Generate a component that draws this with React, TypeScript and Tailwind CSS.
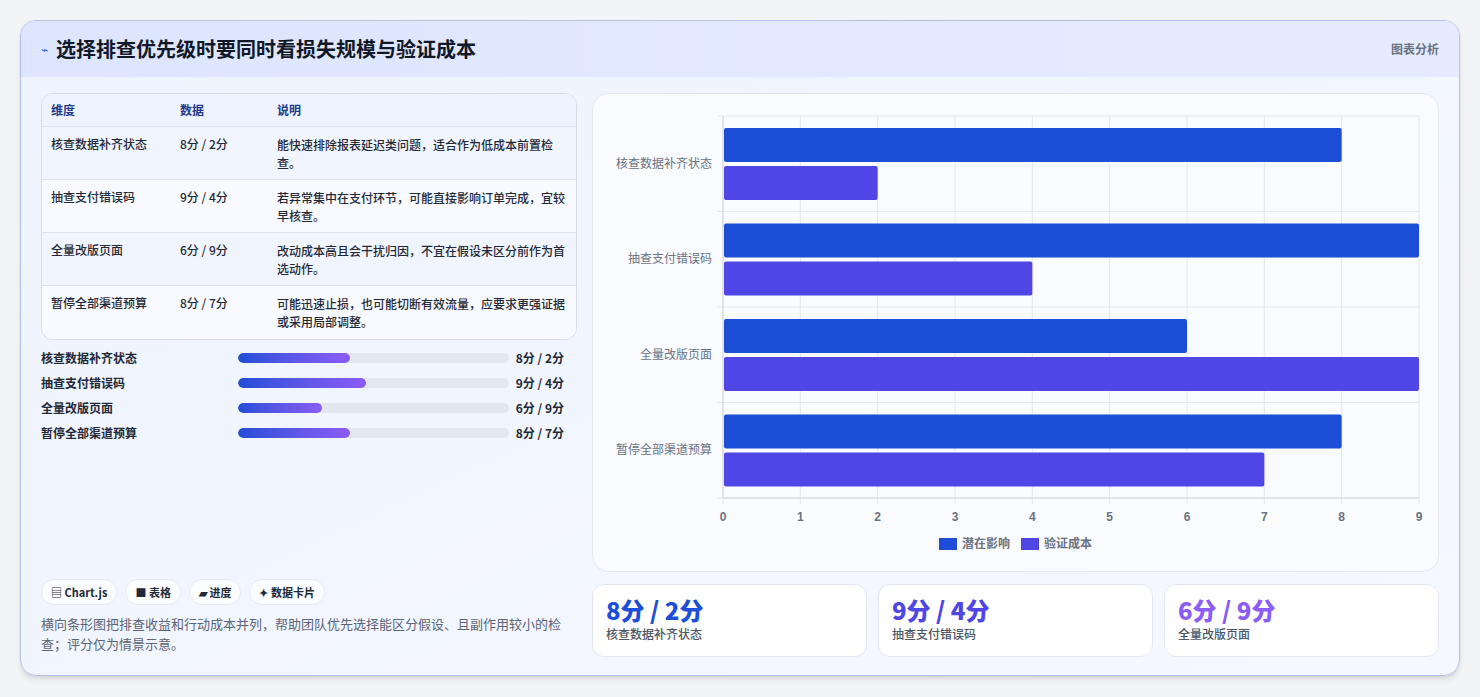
import React from "react";

const rows = [
  { name: "核查数据补齐状态", v: "8分 / 2分", d: "能快速排除报表延迟类问题，适合作为低成本前置检查。", a: 8, b: 2, w: 112 },
  { name: "抽查支付错误码", v: "9分 / 4分", d: "若异常集中在支付环节，可能直接影响订单完成，宜较早核查。", a: 9, b: 4, w: 128 },
  { name: "全量改版页面", v: "6分 / 9分", d: "改动成本高且会干扰归因，不宜在假设未区分前作为首选动作。", a: 6, b: 9, w: 84 },
  { name: "暂停全部渠道预算", v: "8分 / 7分", d: "可能迅速止损，也可能切断有效流量，应要求更强证据或采用局部调整。", a: 8, b: 7, w: 112 },
];

function Chart() {
  const x0 = 130, x1 = 826, y0 = 22, y1 = 404;
  const u = (x1 - x0) / 9;
  const band = (y1 - y0) / 4;
  return (
    <svg width="845" height="479" className="block" style={{ fontFamily: "'Liberation Sans','Noto Sans CJK SC',sans-serif" }}>
      {Array.from({ length: 10 }).map((_, i) => (
        <g key={i}>
          <line x1={x0 + i * u} x2={x0 + i * u} y1={y0} y2={y1 + 6} stroke="#e5e7eb" />
          <text x={x0 + i * u} y={427} textAnchor="middle" fontSize="12" fontWeight="bold" fill="#6b7280">{i}</text>
        </g>
      ))}
      {Array.from({ length: 5 }).map((_, i) => (
        <line key={i} x1={x0 - 6} x2={x1} y1={y0 + i * band} y2={y0 + i * band} stroke="#e5e7eb" />
      ))}
      <line x1={x0} x2={x0} y1={y0} y2={y1} stroke="#d1d5db" />
      <line x1={x0} x2={x1} y1={y1} y2={y1} stroke="#d1d5db" />
      {rows.map((r, i) => {
        const top = y0 + i * band;
        return (
          <g key={i}>
            <rect x={x0 + 1} y={top + 12} width={r.a * u - 1} height={34} rx="2" fill="#1d4ed8" />
            <rect x={x0 + 1} y={top + 50} width={r.b * u - 1} height={34} rx="2" fill="#4f46e5" />
            <text x={119} y={top + band / 2 + 4} textAnchor="end" fontSize="12" fill="#6b7280">{r.name}</text>
          </g>
        );
      })}
      <rect x={346} y={444} width={18} height={12} fill="#1d4ed8" />
      <text x={369} y={454} fontSize="12" fontWeight="bold" fill="#6b7280">潜在影响</text>
      <rect x={428} y={444} width={18} height={12} fill="#4f46e5" />
      <text x={451} y={454} fontSize="12" fontWeight="bold" fill="#6b7280">验证成本</text>
    </svg>
  );
}

export default function App() {
  return (
    <div className="w-[1480px] h-[697px] bg-[#f3f4f6] pt-5 px-5" style={{ fontFamily: "'Noto Sans CJK SC','Liberation Sans',sans-serif" }}>
      <div className="h-[656px] rounded-2xl border border-[#b7c0ec] bg-gradient-to-br from-[#eef3ff] to-[#f5f8ff] overflow-hidden shadow-md">
        <div className="h-[56px] bg-gradient-to-r from-[#dde5ff] to-[#e6ecff] flex items-center justify-between px-5">
          <div className="flex items-center gap-2">
            <span className="text-[#2563eb] text-xs">⌁</span>
            <span className="text-[20px] font-bold text-[#111827]">选择排查优先级时要同时看损失规模与验证成本</span>
          </div>
          <span className="text-xs font-bold text-[#6b7280]">图表分析</span>
        </div>
        <div className="flex gap-[15px] px-5 pt-4">
          <div className="w-[540px] h-[564px] flex flex-col">
            <div className="rounded-xl border border-[#d6dceb] overflow-hidden bg-white/60 text-xs">
              <div className="flex h-[33px] items-center bg-[#eef3ff] border-b border-[#dde3ee] font-bold text-[#1e3a8a]">
                <div className="w-[138px] pl-[9px]">维度</div>
                <div className="w-[97px]">数据</div>
                <div className="flex-1">说明</div>
              </div>
              {rows.map((r, i) => (
                <div key={i} className={`flex h-[53px] pt-[9px] ${i % 2 ? "bg-[#f8faff]" : "bg-[#f1f5ff]"} ${i < 3 ? "border-b border-[#dde3ee]" : ""} text-[#1f2937] font-medium`}>
                  <div className="w-[138px] pl-[9px]">{r.name}</div>
                  <div className="w-[97px]">{r.v}</div>
                  <div className="flex-1 pr-2 leading-[18px]">{r.d}</div>
                </div>
              ))}
            </div>
            <div className="mt-[9px] flex flex-col gap-[7px]">
              {rows.map((r, i) => (
                <div key={i} className="flex items-center h-[18px] text-xs font-bold text-[#1f2937]">
                  <div className="w-[197px]">{r.name}</div>
                  <div className="w-[271px] h-[10px] rounded-full bg-[#e3e8f0] overflow-hidden">
                    <div className="h-full rounded-full bg-gradient-to-r from-[#1d4ed8] to-[#8b5cf6]" style={{ width: r.w }} />
                  </div>
                  <div className="flex-1 text-right pr-[13px]">{r.v}</div>
                </div>
              ))}
            </div>
            <div className="flex-1" />
            <div className="flex gap-2 text-[11px] font-bold text-[#1f2937]">
              <span className="rounded-full bg-white/80 border border-[#e5e9f2] px-[9px] py-[4px]">▤ Chart.js</span>
              <span className="rounded-full bg-white/80 border border-[#e5e9f2] px-[9px] py-[4px]">■ 表格</span>
              <span className="rounded-full bg-white/80 border border-[#e5e9f2] px-[9px] py-[4px]">▰ 进度</span>
              <span className="rounded-full bg-white/80 border border-[#e5e9f2] px-[9px] py-[4px]">✦ 数据卡片</span>
            </div>
            <p className="mt-[9px] text-[13px] leading-[20px] text-[#5b6477] pr-2">横向条形图把排查收益和行动成本并列，帮助团队优先选择能区分假设、且副作用较小的检查；评分仅为情景示意。</p>
            <div className="h-[3px]" />
          </div>
          <div className="flex-1 flex flex-col gap-3">
            <div className="h-[479px] rounded-2xl border border-[#e2e7f2] bg-[#f9fbff]">
              <Chart />
            </div>
            <div className="flex gap-[11px]">
              {[
                { v: "8分 / 2分", n: "核查数据补齐状态", c: "text-[#1d4ed8]" },
                { v: "9分 / 4分", n: "抽查支付错误码", c: "text-[#4f46e5]" },
                { v: "6分 / 9分", n: "全量改版页面", c: "text-[#8b5cf6]" },
              ].map((s, i) => (
                <div key={i} className="flex-1 h-[73px] rounded-xl border border-[#e2e7f2] bg-white px-[13px] pt-[10px]">
                  <div className="text-[24px] leading-[30px] font-extrabold"><span className={s.c}>{s.v}</span></div>
                  <div className="mt-[1px] text-xs leading-[16px] text-[#4b5563] font-medium">{s.n}</div>
                </div>
              ))}
            </div>
          </div>
        </div>
      </div>
    </div>
  );
}
